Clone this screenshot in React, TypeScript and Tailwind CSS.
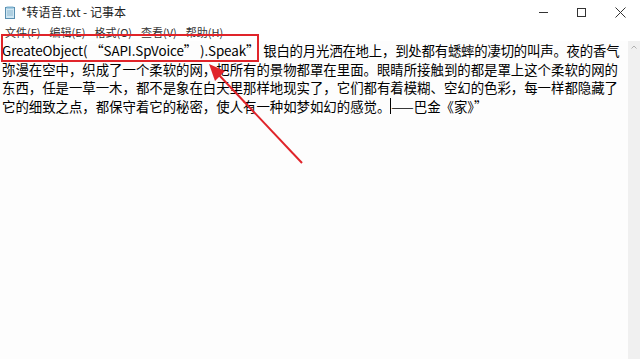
import React from "react";

const menus = ["文件(F)", "编辑(E)", "格式(O)", "查看(V)", "帮助(H)"];

const lines = [
  "弥漫在空中，织成了一个柔软的网，把所有的景物都罩在里面。眼睛所接触到的都是罩上这个柔软的网的",
  "东西，任是一草一木，都不是象在白天里那样地现实了，它们都有着模糊、空幻的色彩，每一样都隐藏了",
];

const NoteIcon = () => (
  <svg width="10" height="13" viewBox="0 0 10 13">
    <rect x="0.5" y="1.5" width="9" height="11" fill="#cfe6f2" stroke="#5a8fb0" />
    <rect x="1.5" y="0.5" width="7" height="2" fill="#7fb2d0" />
    <line x1="2" y1="5" x2="8" y2="5" stroke="#8fb8cf" />
    <line x1="2" y1="7" x2="8" y2="7" stroke="#8fb8cf" />
    <line x1="2" y1="9" x2="8" y2="9" stroke="#8fb8cf" />
  </svg>
);

export default function App() {
  return (
    <div
      className="relative w-[640px] h-[359px] bg-[#fdfdfd] flex flex-col overflow-hidden text-black"
      style={{ fontFamily: '"Noto Sans CJK SC", "Noto Sans", sans-serif' }}
    >
      {/* title bar */}
      <div className="h-[24px] flex items-center bg-white">
        <div className="ml-[5px] flex items-center">
          <NoteIcon />
        </div>
        <span className="ml-[6px] text-[12px] text-[#222] leading-none">*转语音.txt - 记事本</span>
        <div className="ml-auto flex items-center h-full">
          <div className="w-[38px] flex justify-center">
            <div className="w-[9px] h-px bg-[#333]" />
          </div>
          <div className="w-[38px] flex justify-center">
            <div className="w-[9px] h-[9px] border border-[#333]" />
          </div>
          <div className="w-[40px] flex justify-center">
            <svg width="11" height="11" viewBox="0 0 11 11">
              <path d="M0.5 0.5L10.5 10.5M10.5 0.5L0.5 10.5" stroke="#333" strokeWidth="1" />
            </svg>
          </div>
        </div>
      </div>

      {/* menu bar */}
      <div className="h-[17px] flex items-center pl-[5px] gap-[9px] bg-white text-[11px] text-[#333] leading-none">
        {menus.map((m) => (
          <span key={m}>{m}</span>
        ))}
      </div>

      {/* editor */}
      <div className="flex-1 flex min-h-0">
        <div className="flex-1 pl-[2px] text-[13.4px] leading-[18.6px] overflow-hidden">
          <div className="whitespace-pre">
            <span className="tracking-[-0.1px]">GreateObject( “SAPI.SpVoice” ).Speak”</span>
            <span className="ml-[4px] tracking-[-0.2px]">银白的月光洒在地上，到处都有蟋蟀的凄切的叫声。夜的香气</span>
          </div>
          {lines.map((l) => (
            <div key={l} className="whitespace-pre">
              {l}
            </div>
          ))}
          <div className="whitespace-pre flex items-center">
            <span>它的细致之点，都保守着它的秘密，使人有一种如梦如幻的感觉。</span>
            <span className="inline-block w-px h-[16px] bg-black" />
            <span>——巴金《家》”</span>
          </div>
        </div>
        <div className="w-[12px] bg-[#f0f0f0] flex justify-center pt-[4px]">
          <svg width="6" height="4" viewBox="0 0 6 4">
            <path d="M0.5 3.5L3 1L5.5 3.5" stroke="#b0b0b0" fill="none" />
          </svg>
        </div>
      </div>

      {/* annotations */}
      <div className="absolute left-[1px] top-[34px] w-[258px] h-[28px] border-2 border-[#e0242a]" />
      <svg className="absolute left-0 top-0" width="640" height="359" viewBox="0 0 640 359">
        <line x1="302" y1="163" x2="218" y2="74" stroke="#e0242a" strokeWidth="2" />
        <polygon points="209,64 225,71 215,81" fill="#e0242a" />
      </svg>
    </div>
  );
}
